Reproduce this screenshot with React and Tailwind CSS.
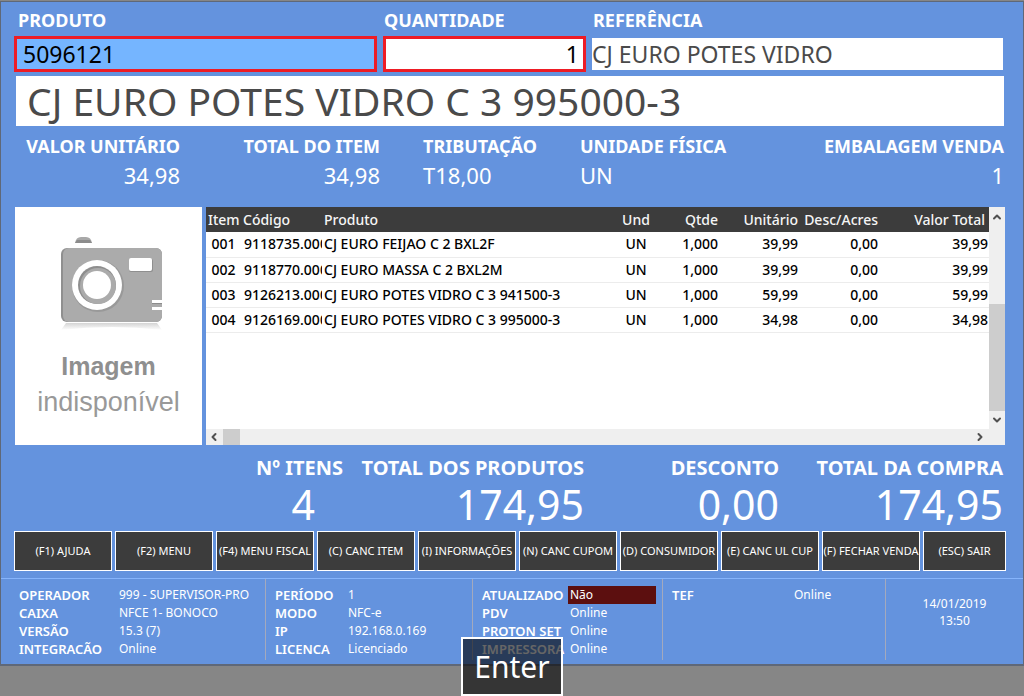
import React, { useState } from "react";
import { ChevronUp, ChevronDown, ChevronLeft, ChevronRight } from "lucide-react";

const items = [
  { id: "001", code: "9118735.000", name: "CJ EURO FEIJAO C 2 BXL2F", price: "39,99" },
  { id: "002", code: "9118770.000", name: "CJ EURO MASSA C 2 BXL2M", price: "39,99" },
  { id: "003", code: "9126213.000", name: "CJ EURO POTES VIDRO C 3 941500-3", price: "59,99" },
  { id: "004", code: "9126169.000", name: "CJ EURO POTES VIDRO C 3 995000-3", price: "34,98" },
];

const actions = [
  "(F1) AJUDA",
  "(F2) MENU",
  "(F4) MENU FISCAL",
  "(C) CANC ITEM",
  "(I) INFORMAÇÕES",
  "(N) CANC CUPOM",
  "(D) CONSUMIDOR",
  "(E) CANC UL CUP",
  "(F) FECHAR VENDA",
  "(ESC) SAIR",
];

const operatorInfo = [
  ["OPERADOR", "999 - SUPERVISOR-PRO"],
  ["CAIXA", "NFCE 1- BONOCO"],
  ["VERSÃO", "15.3 (7)"],
  ["INTEGRACÃO", "Online"],
];

const sessionInfo = [
  ["PERÍODO", "1"],
  ["MODO", "NFC-e"],
  ["IP", "192.168.0.169"],
  ["LICENCA", "Licenciado"],
];

const deviceInfo = [
  ["ATUALIZADO", "Não"],
  ["PDV", "Online"],
  ["PROTON SET", "Online"],
  ["IMPRESSORA", "Online"],
];

const Info = ({ label, value, className = "" }) => (
  <div className={className}>
    <div className="text-[18px] leading-6 font-bold">{label}</div>
    <div className="text-[22px] leading-[34px]">{value}</div>
  </div>
);

const Total = ({ label, value, className = "" }) => (
  <div className={`text-right ${className}`}>
    <div className="text-[20px] leading-7 font-bold">{label}</div>
    <div className="text-[41px] leading-[44px]">{value}</div>
  </div>
);

const StatusList = ({ rows, columns }) => (
  <dl className={`grid ${columns} auto-rows-[18px] text-[12px] leading-[18px]`}>
    {rows.map(([label, value]) => (
      <React.Fragment key={label}>
        <dt className="font-semibold text-[13px]">{label}</dt>
        <dd className={value === "Não" ? "bg-[#5c0f0f] pl-0.5" : "pl-0.5"}>{value}</dd>
      </React.Fragment>
    ))}
  </dl>
);

const NoImage = () => (
  <div className="flex w-[187px] shrink-0 flex-col items-center bg-white pt-[29px] font-['Liberation_Sans',sans-serif]">
    <svg width="110" height="96" viewBox="0 0 110 96" className="ml-1" aria-hidden="true">
      <defs>
        <linearGradient id="shade" x1="0" y1="0" x2="0" y2="1">
          <stop offset="0" stopColor="#d4d4d4" />
          <stop offset="1" stopColor="#ffffff" />
        </linearGradient>
      </defs>
      <path d="M19 7 Q20 1 25 1 H30 Q35 1 36 7 Z" fill="#a8a8a8" />
      <path d="M21 4 H34 L36 7 H19 Z" fill="#8c8c8c" />
      <rect x="5" y="12" width="101" height="74" rx="6" fill="#8f8f8f" />
      <rect x="7" y="12" width="99" height="74" rx="6" fill="#ababab" />
      <circle cx="42" cy="50" r="26" fill="#999999" />
      <circle cx="41" cy="49" r="25" fill="#ffffff" />
      <circle cx="41" cy="49" r="19" fill="#8e8e8e" />
      <circle cx="42" cy="50" r="18" fill="#ababab" />
      <circle cx="41" cy="49" r="14" fill="#ffffff" />
      <rect x="73" y="23" width="24" height="13" rx="2" fill="#8f8f8f" />
      <rect x="73" y="22" width="23" height="13" rx="2" fill="#ffffff" />
      <path d="M96 64 H107 V67 H96 Z M96 71 H107 V74 H96 Z" fill="#ffffff" />
      <path d="M96 67 H106 V68 H96 Z" fill="#8c8c8c" />
      <path d="M10 87 H101 L106 94 Q56 88 5 94 Z" fill="url(#shade)" />
    </svg>
    <p className="mt-4 text-[25px] leading-9 font-bold text-[#8f8f8f]">Imagem</p>
    <p className="text-[27px] leading-9 text-[#999999]">indisponível</p>
  </div>
);

const ItemsTable = () => (
  <div className="flex min-w-0 flex-1 flex-col bg-[#efefef]">
    <div className="flex flex-1">
      <div className="min-w-0 flex-1 bg-white">
        <table className="w-full table-fixed text-[14px] leading-6 whitespace-nowrap text-black">
          <colgroup>
            <col className="w-[35px]" />
            <col className="w-[81px]" />
            <col />
            <col className="w-[62px]" />
            <col className="w-[51px]" />
            <col className="w-[80px]" />
            <col className="w-[80px]" />
            <col className="w-[111px]" />
          </colgroup>
          <thead className="bg-[#3c3c3c] text-[#f5f5f5]">
            <tr className="h-[25px]">
              <th className="pl-0.5 text-left font-medium">Item</th>
              <th className="pl-0.5 text-left font-medium">Código</th>
              <th className="pl-0.5 text-left font-medium">Produto</th>
              <th className="font-medium">Und</th>
              <th className="text-right font-medium">Qtde</th>
              <th className="text-right font-medium">Unitário</th>
              <th className="text-right font-medium">Desc/Acres</th>
              <th className="pr-1 text-right font-medium">Valor Total</th>
            </tr>
          </thead>
          <tbody className="font-medium">
            {items.map((item) => (
              <tr key={item.id} className="h-[25px] border-b border-[#ececec]">
                <td className="text-center">{item.id}</td>
                <td className="overflow-hidden pl-[3px]">{item.code}</td>
                <td className="overflow-hidden pl-0.5">{item.name}</td>
                <td className="text-center">UN</td>
                <td className="text-right">1,000</td>
                <td className="text-right">{item.price}</td>
                <td className="text-right">0,00</td>
                <td className="pr-px text-right">{item.price}</td>
              </tr>
            ))}
          </tbody>
        </table>
      </div>

      {/* Vertical scrollbar */}
      <div className="flex w-4 flex-col items-center">
        <button type="button" aria-label="Subir" className="py-1 text-[#505050]">
          <ChevronUp size={12} strokeWidth={4} />
        </button>
        <div className="mt-auto h-[107px] w-full bg-[#cdcdcd]" />
        <button type="button" aria-label="Descer" className="py-[3px] text-[#505050]">
          <ChevronDown size={12} strokeWidth={4} />
        </button>
      </div>
    </div>

    {/* Horizontal scrollbar */}
    <div className="flex h-4 items-center pr-[19px]">
      <button type="button" aria-label="Esquerda" className="w-[17px] pl-0.5 text-[#505050]">
        <ChevronLeft size={12} strokeWidth={4} />
      </button>
      <div className="h-full w-[17px] bg-[#cdcdcd]" />
      <button type="button" aria-label="Direita" className="ml-auto text-[#505050]">
        <ChevronRight size={12} strokeWidth={4} />
      </button>
    </div>
  </div>
);

const App = () => {
  const [product, setProduct] = useState("5096121");
  const [quantity, setQuantity] = useState("1");

  return (
    <div className="relative min-h-screen overflow-hidden bg-[#868686] pt-px font-['Noto_Sans','Open_Sans',sans-serif] text-white">
      <main className="border border-b-2 border-[#5f6878] bg-[#6493de]">
        <div className="pr-[18px] pl-[13px]">
          {/* Product entry */}
          <div className="grid grid-cols-[363fr_203fr_411fr] gap-x-1.5 pt-1.5 pr-0.5">
            <label htmlFor="product" className="pl-1 text-[18px] leading-6 font-bold">
              PRODUTO
            </label>
            <label htmlFor="quantity" className="pl-px text-[18px] leading-6 font-bold">
              QUANTIDADE
            </label>
            <label htmlFor="reference" className="pl-px text-[18px] leading-6 font-bold">
              REFERÊNCIA
            </label>
            <input
              id="product"
              value={product}
              onChange={(e) => setProduct(e.target.value)}
              className="mt-1 h-9 w-full min-w-0 border-[3px] border-[#ee1c25] bg-[#75b5ff] px-1.5 text-[23px] text-black outline-none"
            />
            <input
              id="quantity"
              value={quantity}
              onChange={(e) => setQuantity(e.target.value)}
              className="mt-1 h-9 w-full min-w-0 border-[3px] border-[#ee1c25] bg-white px-1 text-right text-[23px] text-black outline-none"
            />
            <input
              id="reference"
              readOnly
              value="CJ EURO POTES VIDRO"
              className="mt-[6px] h-8 w-full min-w-0 bg-white text-[23px] text-[#4a4a4a] outline-none"
            />
          </div>

          <h1 className="mt-1 mr-px ml-0.5 bg-white pl-[11px] text-[39px] leading-[50px] text-[#4a4a4a]">
            CJ EURO POTES VIDRO C 3 995000-3
          </h1>

          <div className="mt-2 mr-px flex">
            <Info label="VALOR UNITÁRIO" value="34,98" className="w-[166px] text-right" />
            <Info label="TOTAL DO ITEM" value="34,98" className="w-[200px] text-right" />
            <Info label="TRIBUTAÇÃO" value="T18,00" className="ml-[43px] w-[157px]" />
            <Info label="UNIDADE FÍSICA" value="UN" />
            <Info label="EMBALAGEM VENDA" value="1" className="ml-auto text-right" />
          </div>

          <div className="mt-[15px] ml-px flex h-[238px] gap-1">
            <NoImage />
            <ItemsTable />
          </div>

          <div className="mt-[9px] mr-0.5 flex justify-end">
            <Total label="Nº ITENS" value={<span className="pr-7">4</span>} />
            <Total label="TOTAL DOS PRODUTOS" value="174,95" className="w-[241px]" />
            <Total label="DESCONTO" value="0,00" className="w-[195px]" />
            <Total label="TOTAL DA COMPRA" value="174,95" className="w-[224px]" />
          </div>

          <div className="-mr-px mt-[5px] grid grid-cols-[repeat(9,98fr)_83fr] gap-[3px]">
            {actions.map((action) => (
              <button
                key={action}
                type="button"
                className="flex h-10 min-w-0 items-center justify-center overflow-hidden border border-white bg-[#3c3c3c] text-[11px] whitespace-nowrap"
              >
                {action}
              </button>
            ))}
          </div>
        </div>

        {/* Status bar */}
        <footer className="mt-[7px] flex h-[86px] border-t border-[#86b4fb] pb-1">
          <div className="w-[265px] border-r border-[#a3a9bd] pt-[7px] pl-[18px]">
            <StatusList rows={operatorInfo} columns="grid-cols-[98px_1fr]" />
          </div>
          <div className="w-[207px] border-r border-[#a3a9bd] pt-[7px] pl-[9px]">
            <StatusList rows={sessionInfo} columns="grid-cols-[71px_1fr]" />
          </div>
          <div className="w-[190px] border-r border-[#a3a9bd] pt-[7px] pr-1.5 pl-[9px]">
            <StatusList rows={deviceInfo} columns="grid-cols-[86px_1fr]" />
          </div>
          <div className="flex-1 border-r border-[#a3a9bd] pt-[7px] pl-[9px]">
            <StatusList rows={[["TEF", "Online"]]} columns="grid-cols-[120px_1fr]" />
          </div>
          <div className="w-[137px] pt-4 text-center text-[12px] leading-[17px]">
            <div>14/01/2019</div>
            <div>13:50</div>
          </div>
        </footer>
      </main>

      {/* Key hint */}
      <div className="pointer-events-none absolute inset-x-0 bottom-0 flex justify-center">
        <kbd className="h-[59px] w-[102px] border-2 border-white bg-black/60 text-center font-['Noto_Sans','Open_Sans',sans-serif] text-[30px] leading-[56px]">
          Enter
        </kbd>
      </div>
    </div>
  );
};

export default App;
